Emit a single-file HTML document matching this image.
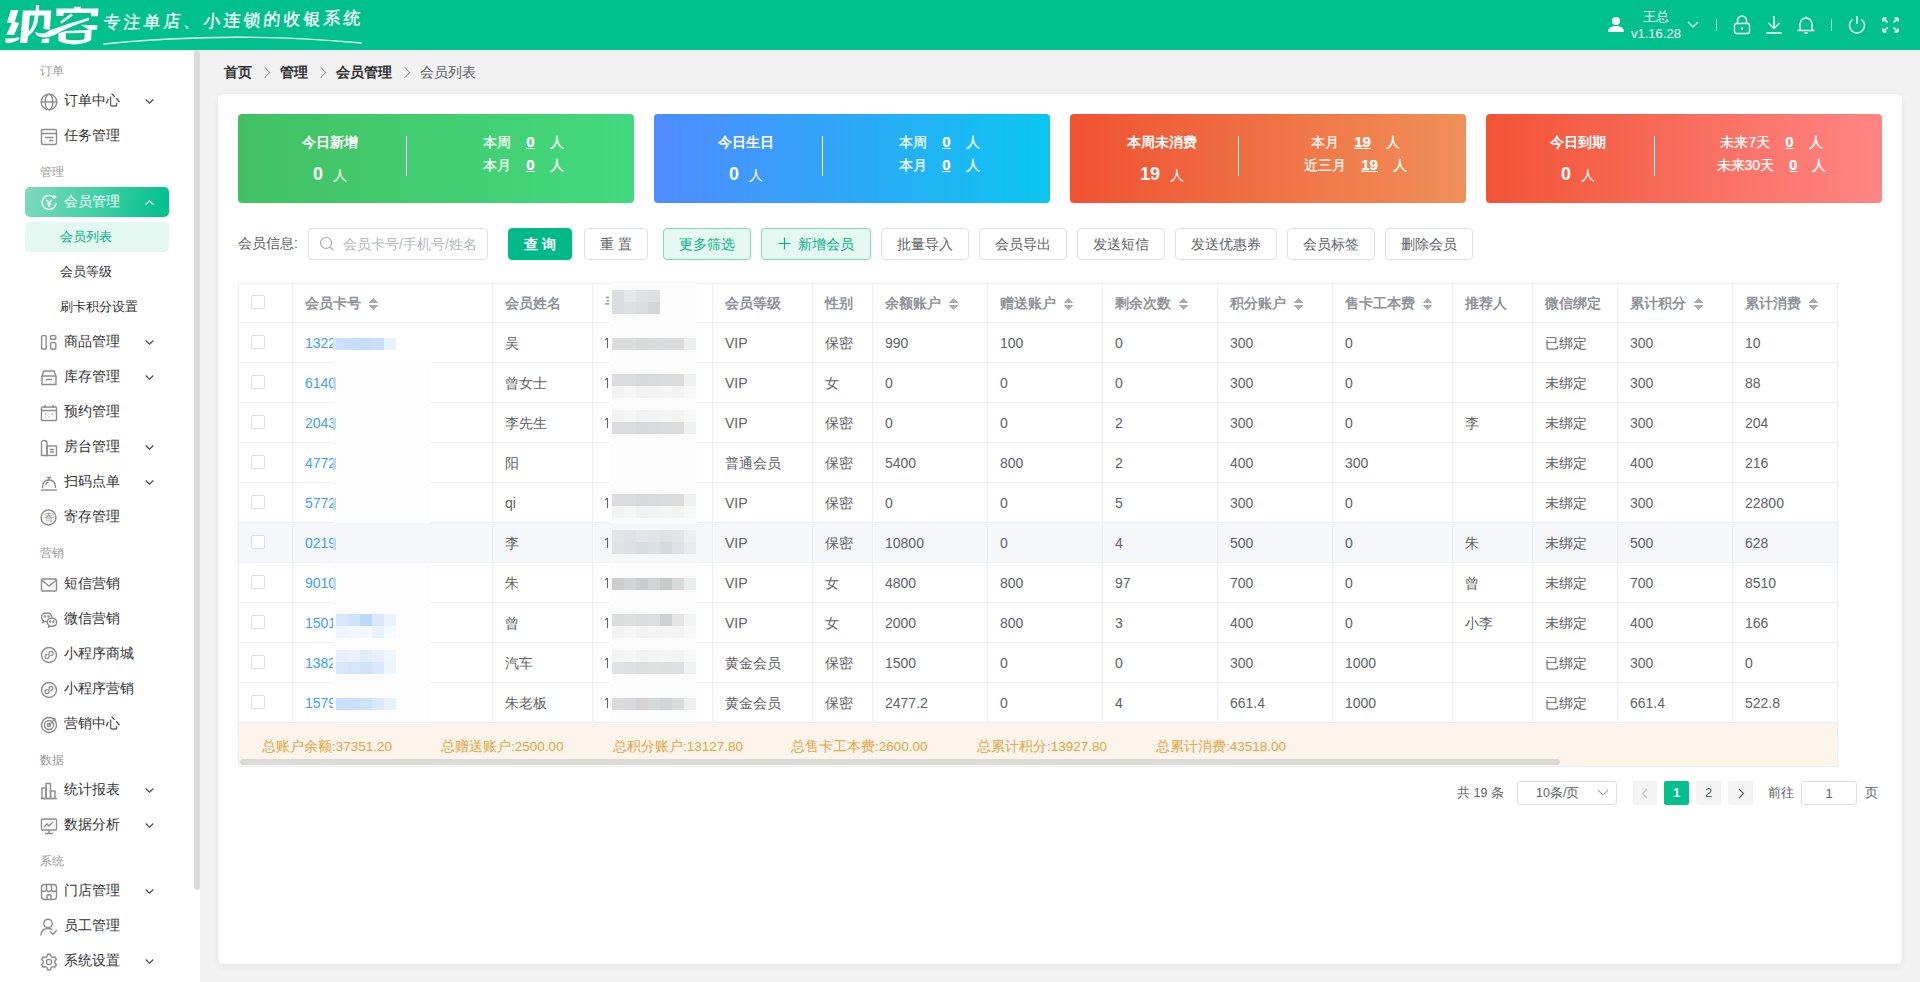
<!DOCTYPE html><html><head><meta charset="utf-8"><style>*{box-sizing:border-box;margin:0;padding:0}
html,body{width:1920px;height:982px;overflow:hidden;background:#f2f2f2;font-family:"Liberation Sans",sans-serif;font-size:14px;color:#606266}
.a{position:absolute;white-space:nowrap}
#hdr{position:absolute;left:0;top:0;width:1920px;height:50px;background:#00c08b}
#side{position:absolute;left:0;top:50px;width:200px;height:932px;background:#fff}
#sbar{position:absolute;left:194px;top:50px;width:6px;height:840px;background:#dcdcdf;border-radius:3px}
.glabel{position:absolute;left:40px;font-size:12px;color:#999;line-height:16px}
.mi{position:absolute;left:40px;width:130px;height:20px;font-size:14px;color:#333;line-height:20px}
.mi svg.ic{position:absolute;left:0;top:3px}
.mi .t{position:absolute;left:24px;top:0;white-space:nowrap}
.mi svg.chev{position:absolute;left:105px;top:9px}
.sub{position:absolute;left:60px;font-size:13px;color:#333;line-height:18px}
#card{position:absolute;left:218px;top:94px;width:1684px;height:870px;background:#fff;border-radius:6px;box-shadow:0 2px 10px rgba(0,0,0,.06)}
.stat{position:absolute;top:114px;width:396px;height:89px;border-radius:4px;color:#fff}
</style></head><body>
<div id="hdr"></div>
<svg class="a" style="left:0;top:0" width="110" height="50" viewBox="0 0 1920 873"><g fill="#fff"><path d="M190 175 L320 175 L258 385 L335 400 L245 612 L108 612 L205 405 L120 392 Z"/><path d="M88 672 Q200 680 330 652 L332 695 Q230 745 160 755 L100 752 Z"/><path d="M400 185 L895 185 L870 520 L760 505 L772 270 L670 270 Q670 500 488 640 L475 752 L350 752 Z M520 270 L500 555 Q590 450 605 270 Z"/><path d="M625 88 L682 88 L682 190 L625 190 Z"/><path d="M735 680 L860 670 L855 752 L722 752 Z"/><path d="M605 555 Q760 625 870 530 Q1200 400 1555 310 L1555 355 Q1250 450 1000 585 Q800 705 640 620 Z"/><path d="M1290 118 L1412 118 L1412 165 L1290 165 Z"/><path d="M985 150 L1720 150 L1710 282 L1588 282 L1588 228 L1112 228 L1105 280 L985 280 Z"/><path d="M1048 378 L1240 238 L1275 270 L1078 412 Z"/><path d="M1410 432 L1705 440 L1690 520 L1550 520 Z"/><path d="M1020 580 L1150 540 L1600 520 L1590 700 Q1500 770 1300 775 Q1100 770 1020 712 Z M1152 582 L1152 690 Q1300 715 1472 690 L1480 575 Z" fill-rule="evenodd"/></g></svg>
<div class="a" style="left:103px;top:9px;font-size:17px;line-height:24px;color:#fff;letter-spacing:3px;-webkit-text-stroke:0.3px #fff;transform:rotate(-1deg) skewX(-6deg)">专注单店、小连锁的收银系统</div>
<svg class="a" style="left:100px;top:33px" width="266" height="14"><path d="M3 11 Q130 -2 262 10" stroke="#fff" stroke-width="1.3" fill="none" opacity=".9"/></svg>
<svg class="a" style="left:1607px;top:16px" width="18" height="18" viewBox="0 0 18 18"><circle cx="9" cy="5" r="4" fill="#fff"/><path d="M1 16 Q1 10 9 10 Q17 10 17 16 Z" fill="#fff"/></svg>
<div class="a" style="left:1643px;top:9px;font-size:13px;line-height:16px;color:#fff">王总</div>
<div class="a" style="left:1631px;top:26px;font-size:13px;line-height:16px;color:#fff">v1.16.28</div>
<svg class="a" style="left:1687px;top:21px" width="12" height="8"><path d="M1 1 L6 6 L11 1" stroke="#fff" stroke-width="1.2" fill="none"/></svg>
<div class="a" style="left:1716px;top:19px;width:1px;height:12px;background:rgba(255,255,255,.6)"></div>
<div class="a" style="left:1831px;top:19px;width:1px;height:12px;background:rgba(255,255,255,.6)"></div>
<svg class="a" style="left:1733px;top:15px" width="18" height="20" viewBox="0 0 18 20"><rect x="1.5" y="8.5" width="15" height="10" rx="2" stroke="#fff" stroke-width="1.4" fill="none"/><path d="M4.5 8.5 V5.5 A4.5 4.5 0 0 1 13.5 5.5 V8.5" stroke="#fff" stroke-width="1.4" fill="none"/><path d="M9 12 V15" stroke="#fff" stroke-width="1.6"/></svg>
<svg class="a" style="left:1765px;top:15px" width="18" height="20" viewBox="0 0 18 20"><path d="M9 1 V13 M3.5 8 L9 13.5 L14.5 8 M1 18 H17" stroke="#fff" stroke-width="1.4" fill="none"/></svg>
<svg class="a" style="left:1796px;top:15px" width="20" height="20" viewBox="0 0 20 20"><path d="M10 1.5 V3 M4 15 V9 A6 6 0 0 1 16 9 V15 M1.5 15.5 H18.5 M8.5 17.5 Q10 19 11.5 17.5" stroke="#fff" stroke-width="1.4" fill="none"/></svg>
<svg class="a" style="left:1847px;top:15px" width="20" height="20" viewBox="0 0 20 20"><path d="M10 1 V9" stroke="#fff" stroke-width="1.4"/><path d="M5.5 4.5 A7.5 7.5 0 1 0 14.5 4.5" stroke="#fff" stroke-width="1.4" fill="none"/></svg>
<svg class="a" style="left:1882px;top:17px" width="17" height="16" viewBox="0 0 17 16"><path d="M1 1 L5.5 5.5 M1 1 H4.5 M1 1 V4.5 M16 1 L11.5 5.5 M16 1 H12.5 M16 1 V4.5 M1 15 L5.5 10.5 M1 15 H4.5 M1 15 V11.5 M16 15 L11.5 10.5 M16 15 H12.5 M16 15 V11.5" stroke="#fff" stroke-width="1.6" fill="none"/></svg>
<div id="side"></div>
<div id="sbar"></div>
<div class="glabel" style="top:63px">订单</div>
<div class="mi" style="top:90px"><svg class="ic" width="18" height="18" viewBox="0 0 18 18" fill="none" stroke="#8c8c8c" stroke-width="1.4"><circle cx="9" cy="9" r="7.8"/><path d="M1.2 9 H16.8"/><ellipse cx="9" cy="9" rx="3.8" ry="7.8"/></svg><span class="t">订单中心</span><svg class="chev" width="9" height="5" viewBox="0 0 9 5"><path d="M0.7 0.5 L4.5 4.2 L8.3 0.5" stroke="#444" stroke-width="1.1" fill="none"/></svg></div>
<div class="mi" style="top:125px"><svg class="ic" width="18" height="18" viewBox="0 0 18 18" fill="none" stroke="#8c8c8c" stroke-width="1.4"><rect x="1.5" y="1.5" width="15" height="15" rx="1.5"/><path d="M1.5 5.5 H16.5 M5 9.5 H13 M9 12.5 H13"/></svg><span class="t">任务管理</span></div>
<div class="glabel" style="top:164px">管理</div>
<div class="a" style="left:25px;top:187px;width:144px;height:30px;border-radius:5px;background:linear-gradient(100deg,#7ddbbd 0%,#3fcfa3 50%,#00c08b 100%)"></div>
<div class="mi" style="top:191px;color:#fff"><svg class="ic" width="18" height="18" viewBox="0 0 18 18" fill="none" stroke="#fff" stroke-width="1.4"><path d="M14.5 4 A7 7 0 1 0 16 9"/><path d="M12 3 H15.5 M13.5 1.5 L15.5 3 L13.5 4.5"/><path d="M6.5 6 L9 9 L11.5 6 M9 9 V13 M7 10 H11"/></svg><span class="t">会员管理</span><svg class="chev" width="9" height="5" viewBox="0 0 9 5"><path d="M0.7 4.5 L4.5 0.8 L8.3 4.5" stroke="#fff" stroke-width="1.1" fill="none"/></svg></div>
<div class="a" style="left:25px;top:222px;width:144px;height:30px;border-radius:5px;background:#e3f8f1"></div>
<div class="sub" style="top:228px;color:#00b386">会员列表</div>
<div class="sub" style="top:263px">会员等级</div>
<div class="sub" style="top:298px">刷卡积分设置</div>
<div class="mi" style="top:331px"><svg class="ic" width="18" height="18" viewBox="0 0 18 18" fill="none" stroke="#8c8c8c" stroke-width="1.4"><rect x="1.6" y="1.6" width="4.6" height="13.4" rx="0.8"/><rect x="10.6" y="1.6" width="5.2" height="3.6" rx="0.8"/><rect x="10.6" y="8.6" width="5.2" height="6.4" rx="0.8"/></svg><span class="t">商品管理</span><svg class="chev" width="9" height="5" viewBox="0 0 9 5"><path d="M0.7 0.5 L4.5 4.2 L8.3 0.5" stroke="#444" stroke-width="1.1" fill="none"/></svg></div>
<div class="mi" style="top:366px"><svg class="ic" width="18" height="18" viewBox="0 0 18 18" fill="none" stroke="#8c8c8c" stroke-width="1.4"><path d="M2 7 V15.5 H16 V7"/><path d="M2 7 L4 2 H14 L16 7 Z"/><path d="M6 10.5 H12"/></svg><span class="t">库存管理</span><svg class="chev" width="9" height="5" viewBox="0 0 9 5"><path d="M0.7 0.5 L4.5 4.2 L8.3 0.5" stroke="#444" stroke-width="1.1" fill="none"/></svg></div>
<div class="mi" style="top:401px"><svg class="ic" width="18" height="18" viewBox="0 0 18 18" fill="none" stroke="#8c8c8c" stroke-width="1.4"><rect x="1.5" y="3" width="15" height="13.5" rx="1"/><path d="M5 1 V4 M13 1 V4 M1.5 6.5 H16.5"/><path d="M5 10 H6 M8.5 10 H9.5 M12 10 H13 M5 13 H6 M8.5 13 H9.5" stroke-width="1.2"/></svg><span class="t">预约管理</span></div>
<div class="mi" style="top:436px"><svg class="ic" width="18" height="18" viewBox="0 0 18 18" fill="none" stroke="#8c8c8c" stroke-width="1.4"><path d="M1.5 16.5 V4 Q1.5 1.5 4 1.5 Q7 1.5 7 4 V16.5 Z"/><rect x="7" y="7" width="9.5" height="9.5"/><path d="M10 10.5 H14 M10 13 H14"/></svg><span class="t">房台管理</span><svg class="chev" width="9" height="5" viewBox="0 0 9 5"><path d="M0.7 0.5 L4.5 4.2 L8.3 0.5" stroke="#444" stroke-width="1.1" fill="none"/></svg></div>
<div class="mi" style="top:471px"><svg class="ic" width="18" height="18" viewBox="0 0 18 18" fill="none" stroke="#8c8c8c" stroke-width="1.4"><path d="M1 16 H17"/><path d="M2.5 14 Q2.5 6 9 6 Q15.5 6 15.5 14"/><path d="M9 4 V6 M7 3.5 H11"/><path d="M6 11 Q6 8.5 8.5 8"/></svg><span class="t">扫码点单</span><svg class="chev" width="9" height="5" viewBox="0 0 9 5"><path d="M0.7 0.5 L4.5 4.2 L8.3 0.5" stroke="#444" stroke-width="1.1" fill="none"/></svg></div>
<div class="mi" style="top:506px"><svg class="ic" width="18" height="18" viewBox="0 0 18 18" fill="none" stroke="#8c8c8c" stroke-width="1.4"><circle cx="8.5" cy="8.5" r="7.5"/><text x="8.5" y="12.2" font-size="9.5" text-anchor="middle" fill="#8c8c8c" stroke="none" font-family="Liberation Sans">寄</text></svg><span class="t">寄存管理</span></div>
<div class="glabel" style="top:545px">营销</div>
<div class="mi" style="top:573px"><svg class="ic" width="18" height="18" viewBox="0 0 18 18" fill="none" stroke="#8c8c8c" stroke-width="1.4"><rect x="1.5" y="3" width="15" height="12" rx="1"/><path d="M1.5 4 L9 10 L16.5 4"/></svg><span class="t">短信营销</span></div>
<div class="mi" style="top:608px"><svg class="ic" width="18" height="18" viewBox="0 0 18 18" fill="none" stroke="#8c8c8c" stroke-width="1.4"><path d="M12 6.5 Q11.5 2 6.8 2 Q1.5 2 1.5 6.3 Q1.5 8.5 3.3 9.6 L2.8 11.5 L5 10.4 Q6 10.7 7 10.7"/><path d="M7.2 11.3 Q7.2 7.3 11.8 7.3 Q16.6 7.3 16.6 11.3 Q16.6 15.3 11.8 15.3 Q11 15.3 10.3 15.1 L8.6 16 L9 14.4 Q7.2 13.3 7.2 11.3 Z"/><circle cx="5" cy="5.5" r="0.5" fill="#8c8c8c"/><circle cx="8.5" cy="5.5" r="0.5" fill="#8c8c8c"/><circle cx="10.2" cy="10.5" r="0.5" fill="#8c8c8c"/><circle cx="13.4" cy="10.5" r="0.5" fill="#8c8c8c"/></svg><span class="t">微信营销</span></div>
<div class="mi" style="top:643px"><svg class="ic" width="18" height="18" viewBox="0 0 18 18" fill="none" stroke="#8c8c8c" stroke-width="1.4"><circle cx="9" cy="9" r="7.5"/><path d="M7.2 8.6 A2 2 0 1 0 9 10.5 V7.5 A2 2 0 1 1 10.8 9.4" stroke-width="1.3" stroke-linecap="round"/></svg><span class="t">小程序商城</span></div>
<div class="mi" style="top:678px"><svg class="ic" width="18" height="18" viewBox="0 0 18 18" fill="none" stroke="#8c8c8c" stroke-width="1.4"><circle cx="9" cy="9" r="7.5"/><path d="M7.2 8.6 A2 2 0 1 0 9 10.5 V7.5 A2 2 0 1 1 10.8 9.4" stroke-width="1.3" stroke-linecap="round"/></svg><span class="t">小程序营销</span></div>
<div class="mi" style="top:713px"><svg class="ic" width="18" height="18" viewBox="0 0 18 18" fill="none" stroke="#8c8c8c" stroke-width="1.4"><circle cx="9" cy="9" r="7.5"/><circle cx="9" cy="9" r="4.5"/><circle cx="9" cy="9" r="1.5"/><path d="M9 9 L15 3 M13 3 H15 V5"/></svg><span class="t">营销中心</span></div>
<div class="glabel" style="top:752px">数据</div>
<div class="mi" style="top:779px"><svg class="ic" width="18" height="18" viewBox="0 0 18 18" fill="none" stroke="#8c8c8c" stroke-width="1.4"><path d="M1 16.5 H17"/><rect x="2" y="6" width="4" height="10.5"/><rect x="6" y="1.5" width="4.5" height="15"/><rect x="10.5" y="9" width="4.5" height="7.5"/></svg><span class="t">统计报表</span><svg class="chev" width="9" height="5" viewBox="0 0 9 5"><path d="M0.7 0.5 L4.5 4.2 L8.3 0.5" stroke="#444" stroke-width="1.1" fill="none"/></svg></div>
<div class="mi" style="top:814px"><svg class="ic" width="18" height="18" viewBox="0 0 18 18" fill="none" stroke="#8c8c8c" stroke-width="1.4"><rect x="1.5" y="2" width="15" height="11" rx="1"/><path d="M9 13 V16.5 M5 16.5 H13 M4 10 L7 7 L9 9 L13 5"/></svg><span class="t">数据分析</span><svg class="chev" width="9" height="5" viewBox="0 0 9 5"><path d="M0.7 0.5 L4.5 4.2 L8.3 0.5" stroke="#444" stroke-width="1.1" fill="none"/></svg></div>
<div class="glabel" style="top:853px">系统</div>
<div class="mi" style="top:880px"><svg class="ic" width="18" height="18" viewBox="0 0 18 18" fill="none" stroke="#8c8c8c" stroke-width="1.4"><rect x="1.5" y="1.5" width="15" height="15" rx="3"/><path d="M1.5 7.5 Q4 9.5 6.5 7.5 Q9 9.5 11.5 7.5 Q14 9.5 16.5 7.5 M6.5 1.5 V7.5 M11.5 1.5 V7.5 M7 16.5 V12.5 Q9 11 11 12.5 V16.5"/></svg><span class="t">门店管理</span><svg class="chev" width="9" height="5" viewBox="0 0 9 5"><path d="M0.7 0.5 L4.5 4.2 L8.3 0.5" stroke="#444" stroke-width="1.1" fill="none"/></svg></div>
<div class="mi" style="top:915px"><svg class="ic" width="18" height="18" viewBox="0 0 18 18" fill="none" stroke="#8c8c8c" stroke-width="1.4"><circle cx="8" cy="5.5" r="4.2"/><path d="M1 17 Q1.5 10.5 8 10.5 Q10.5 10.5 12 11.5" stroke-linecap="round"/><path d="M10.5 14 L12.8 16.3 L16.5 12.5" stroke-linecap="round"/></svg><span class="t">员工管理</span></div>
<div class="mi" style="top:950px"><svg class="ic" width="18" height="18" viewBox="0 0 18 18" fill="none" stroke="#8c8c8c" stroke-width="1.4"><path stroke-linejoin="round" d="M7.6 1.3 H10.4 L11 3.4 L12.9 4.5 L15 3.9 L16.4 6.3 L14.9 7.9 V10.1 L16.4 11.7 L15 14.1 L12.9 13.5 L11 14.6 L10.4 16.7 H7.6 L7 14.6 L5.1 13.5 L3 14.1 L1.6 11.7 L3.1 10.1 V7.9 L1.6 6.3 L3 3.9 L5.1 4.5 L7 3.4 Z"/><circle cx="9" cy="9" r="2.6"/></svg><span class="t">系统设置</span><svg class="chev" width="9" height="5" viewBox="0 0 9 5"><path d="M0.7 0.5 L4.5 4.2 L8.3 0.5" stroke="#444" stroke-width="1.1" fill="none"/></svg></div>
<div class="a" style="left:224px;top:62px;font-size:14px;line-height:20px;color:#303133;font-weight:bold">首页</div>
<div class="a" style="left:280px;top:62px;font-size:14px;line-height:20px;color:#303133;font-weight:bold">管理</div>
<div class="a" style="left:336px;top:62px;font-size:14px;line-height:20px;color:#303133;font-weight:bold">会员管理</div>
<div class="a" style="left:420px;top:62px;font-size:14px;line-height:20px;color:#606266">会员列表</div>
<svg class="a" style="left:263px;top:66px" width="8" height="13"><path d="M1.5 1 L6.5 6.5 L1.5 12" stroke="#a0a0a0" stroke-width="1.1" fill="none"/></svg>
<svg class="a" style="left:319px;top:66px" width="8" height="13"><path d="M1.5 1 L6.5 6.5 L1.5 12" stroke="#a0a0a0" stroke-width="1.1" fill="none"/></svg>
<svg class="a" style="left:403px;top:66px" width="8" height="13"><path d="M1.5 1 L6.5 6.5 L1.5 12" stroke="#a0a0a0" stroke-width="1.1" fill="none"/></svg>
<div id="card"></div>
<div class="stat" style="left:238px;background:linear-gradient(90deg,#42c163,#43d97e)">
<div class="a" style="left:0;width:184px;top:18px;text-align:center;font-weight:bold;font-size:14px;line-height:20px">今日新增</div>
<div class="a" style="left:0;width:184px;top:48px;text-align:center;line-height:24px"><b style="font-size:18px">0</b><span style="font-size:14px;margin-left:10px">人</span></div>
<div class="a" style="left:168px;top:22px;width:1px;height:40px;background:#fff"></div>
<div class="a" style="left:172px;width:227px;top:18px;text-align:center;font-size:14px;line-height:20px;-webkit-text-stroke:0.25px #fff">本周<b style="text-decoration:underline;margin:0 15px 0 15px;font-size:15px">0</b>人</div>
<div class="a" style="left:172px;width:227px;top:41px;text-align:center;font-size:14px;line-height:20px;-webkit-text-stroke:0.25px #fff">本月<b style="text-decoration:underline;margin:0 15px 0 15px;font-size:15px">0</b>人</div>
</div>
<div class="stat" style="left:654px;background:linear-gradient(90deg,#4f8bff,#0bc6f0)">
<div class="a" style="left:0;width:184px;top:18px;text-align:center;font-weight:bold;font-size:14px;line-height:20px">今日生日</div>
<div class="a" style="left:0;width:184px;top:48px;text-align:center;line-height:24px"><b style="font-size:18px">0</b><span style="font-size:14px;margin-left:10px">人</span></div>
<div class="a" style="left:168px;top:22px;width:1px;height:40px;background:#fff"></div>
<div class="a" style="left:172px;width:227px;top:18px;text-align:center;font-size:14px;line-height:20px;-webkit-text-stroke:0.25px #fff">本周<b style="text-decoration:underline;margin:0 15px 0 15px;font-size:15px">0</b>人</div>
<div class="a" style="left:172px;width:227px;top:41px;text-align:center;font-size:14px;line-height:20px;-webkit-text-stroke:0.25px #fff">本月<b style="text-decoration:underline;margin:0 15px 0 15px;font-size:15px">0</b>人</div>
</div>
<div class="stat" style="left:1070px;background:linear-gradient(90deg,#f05232,#f09058)">
<div class="a" style="left:0;width:184px;top:18px;text-align:center;font-weight:bold;font-size:14px;line-height:20px">本周未消费</div>
<div class="a" style="left:0;width:184px;top:48px;text-align:center;line-height:24px"><b style="font-size:18px">19</b><span style="font-size:14px;margin-left:10px">人</span></div>
<div class="a" style="left:168px;top:22px;width:1px;height:40px;background:#fff"></div>
<div class="a" style="left:172px;width:227px;top:18px;text-align:center;font-size:14px;line-height:20px;-webkit-text-stroke:0.25px #fff">本月<b style="text-decoration:underline;margin:0 15px 0 15px;font-size:15px">19</b>人</div>
<div class="a" style="left:172px;width:227px;top:41px;text-align:center;font-size:14px;line-height:20px;-webkit-text-stroke:0.25px #fff">近三月<b style="text-decoration:underline;margin:0 15px 0 15px;font-size:15px">19</b>人</div>
</div>
<div class="stat" style="left:1486px;background:linear-gradient(90deg,#f25435,#ff8584)">
<div class="a" style="left:0;width:184px;top:18px;text-align:center;font-weight:bold;font-size:14px;line-height:20px">今日到期</div>
<div class="a" style="left:0;width:184px;top:48px;text-align:center;line-height:24px"><b style="font-size:18px">0</b><span style="font-size:14px;margin-left:10px">人</span></div>
<div class="a" style="left:168px;top:22px;width:1px;height:40px;background:#fff"></div>
<div class="a" style="left:172px;width:227px;top:18px;text-align:center;font-size:14px;line-height:20px;-webkit-text-stroke:0.25px #fff">未来7天<b style="text-decoration:underline;margin:0 15px 0 15px;font-size:15px">0</b>人</div>
<div class="a" style="left:172px;width:227px;top:41px;text-align:center;font-size:14px;line-height:20px;-webkit-text-stroke:0.25px #fff">未来30天<b style="text-decoration:underline;margin:0 15px 0 15px;font-size:15px">0</b>人</div>
</div>
<div class="a" style="left:238px;top:233px;font-size:14px;line-height:20px;color:#606266">会员信息:</div>
<div class="a" style="left:308px;top:228px;width:180px;height:32px;border:1px solid #dcdfe6;border-radius:4px"></div>
<svg class="a" style="left:319px;top:236px" width="16" height="16" viewBox="0 0 16 16"><circle cx="7" cy="7" r="5.5" stroke="#a8abb2" stroke-width="1.2" fill="none"/><path d="M11 11 L14 14" stroke="#a8abb2" stroke-width="1.2"/></svg>
<div class="a" style="left:343px;top:234px;font-size:14px;line-height:20px;color:#b4b7bd">会员卡号/手机号/姓名</div>
<div class="a" style="left:508px;top:228px;width:64px;height:32px;border-radius:4px;background:#00b988;border:1px solid #00b988;color:#fff;font-weight:bold;text-align:center;font-size:14px;line-height:30px">查 询</div>
<div class="a" style="left:584px;top:228px;width:64px;height:32px;border-radius:4px;background:#fff;border:1px solid #dcdfe6;color:#606266;text-align:center;font-size:14px;line-height:30px">重 置</div>
<div class="a" style="left:663px;top:228px;width:88px;height:32px;border-radius:4px;background:#e6f8f2;border:1px solid #7fd9bd;color:#00b386;text-align:center;font-size:14px;line-height:30px">更多筛选</div>
<div class="a" style="left:761px;top:228px;width:110px;height:32px;border-radius:4px;background:#e6f8f2;border:1px solid #7fd9bd;color:#00b386;text-align:center;font-size:14px;line-height:30px"><svg width="13" height="13" style="vertical-align:-1px;margin-right:7px"><path d="M6.5 0.5 V12.5 M0.5 6.5 H12.5" stroke="#00b386" stroke-width="1.2"/></svg>新增会员</div>
<div class="a" style="left:881px;top:228px;width:88px;height:32px;border-radius:4px;background:#fff;border:1px solid #dcdfe6;color:#606266;text-align:center;font-size:14px;line-height:30px">批量导入</div>
<div class="a" style="left:979px;top:228px;width:88px;height:32px;border-radius:4px;background:#fff;border:1px solid #dcdfe6;color:#606266;text-align:center;font-size:14px;line-height:30px">会员导出</div>
<div class="a" style="left:1077px;top:228px;width:88px;height:32px;border-radius:4px;background:#fff;border:1px solid #dcdfe6;color:#606266;text-align:center;font-size:14px;line-height:30px">发送短信</div>
<div class="a" style="left:1175px;top:228px;width:102px;height:32px;border-radius:4px;background:#fff;border:1px solid #dcdfe6;color:#606266;text-align:center;font-size:14px;line-height:30px">发送优惠券</div>
<div class="a" style="left:1287px;top:228px;width:88px;height:32px;border-radius:4px;background:#fff;border:1px solid #dcdfe6;color:#606266;text-align:center;font-size:14px;line-height:30px">会员标签</div>
<div class="a" style="left:1385px;top:228px;width:88px;height:32px;border-radius:4px;background:#fff;border:1px solid #dcdfe6;color:#606266;text-align:center;font-size:14px;line-height:30px">删除会员</div>
<div class="a" style="left:238px;top:523px;width:1599px;height:40px;background:#f5f7fa"></div>
<div class="a" style="left:238px;top:723px;width:1599px;height:43px;background:#fdf5ec"></div>
<div class="a" style="left:238px;top:283px;width:1600px;height:1px;background:#ebeef5"></div>
<div class="a" style="left:238px;top:322px;width:1600px;height:1px;background:#ebeef5"></div>
<div class="a" style="left:238px;top:362px;width:1600px;height:1px;background:#ebeef5"></div>
<div class="a" style="left:238px;top:402px;width:1600px;height:1px;background:#ebeef5"></div>
<div class="a" style="left:238px;top:442px;width:1600px;height:1px;background:#ebeef5"></div>
<div class="a" style="left:238px;top:482px;width:1600px;height:1px;background:#ebeef5"></div>
<div class="a" style="left:238px;top:522px;width:1600px;height:1px;background:#ebeef5"></div>
<div class="a" style="left:238px;top:562px;width:1600px;height:1px;background:#ebeef5"></div>
<div class="a" style="left:238px;top:602px;width:1600px;height:1px;background:#ebeef5"></div>
<div class="a" style="left:238px;top:642px;width:1600px;height:1px;background:#ebeef5"></div>
<div class="a" style="left:238px;top:682px;width:1600px;height:1px;background:#ebeef5"></div>
<div class="a" style="left:238px;top:722px;width:1600px;height:1px;background:#ebeef5"></div>
<div class="a" style="left:238px;top:766px;width:1600px;height:1px;background:#ebeef5"></div>
<div class="a" style="left:238px;top:283px;width:1px;height:440px;background:#ebeef5"></div>
<div class="a" style="left:292px;top:283px;width:1px;height:440px;background:#ebeef5"></div>
<div class="a" style="left:492px;top:283px;width:1px;height:440px;background:#ebeef5"></div>
<div class="a" style="left:592px;top:283px;width:1px;height:440px;background:#ebeef5"></div>
<div class="a" style="left:712px;top:283px;width:1px;height:440px;background:#ebeef5"></div>
<div class="a" style="left:812px;top:283px;width:1px;height:440px;background:#ebeef5"></div>
<div class="a" style="left:872px;top:283px;width:1px;height:440px;background:#ebeef5"></div>
<div class="a" style="left:987px;top:283px;width:1px;height:440px;background:#ebeef5"></div>
<div class="a" style="left:1102px;top:283px;width:1px;height:440px;background:#ebeef5"></div>
<div class="a" style="left:1217px;top:283px;width:1px;height:440px;background:#ebeef5"></div>
<div class="a" style="left:1332px;top:283px;width:1px;height:440px;background:#ebeef5"></div>
<div class="a" style="left:1452px;top:283px;width:1px;height:440px;background:#ebeef5"></div>
<div class="a" style="left:1532px;top:283px;width:1px;height:440px;background:#ebeef5"></div>
<div class="a" style="left:1617px;top:283px;width:1px;height:440px;background:#ebeef5"></div>
<div class="a" style="left:1732px;top:283px;width:1px;height:440px;background:#ebeef5"></div>
<div class="a" style="left:1837px;top:283px;width:1px;height:440px;background:#ebeef5"></div>
<div class="a" style="left:238px;top:723px;width:1px;height:43px;background:#ebeef5"></div>
<div class="a" style="left:1837px;top:723px;width:1px;height:43px;background:#ebeef5"></div>
<div class="a" style="left:251px;top:295px;width:14px;height:14px;border:1px solid #dcdfe6;border-radius:2px;background:#fff"></div>
<div class="a" style="left:305px;top:293px;font-size:14px;line-height:20px;font-weight:bold;color:#909399">会员卡号</div>
<svg class="a" style="left:368px;top:297px" width="11" height="14" viewBox="0 0 11 14"><path d="M0.5 6 L5.5 1 L10.5 6 Z M0.5 8 L5.5 13 L10.5 8 Z" fill="#a8abb2"/></svg>
<div class="a" style="left:505px;top:293px;font-size:14px;line-height:20px;font-weight:bold;color:#909399">会员姓名</div>
<div class="a" style="left:605px;top:293px;font-size:14px;line-height:20px;font-weight:bold;color:#909399">手机号</div>
<div class="a" style="left:725px;top:293px;font-size:14px;line-height:20px;font-weight:bold;color:#909399">会员等级</div>
<div class="a" style="left:825px;top:293px;font-size:14px;line-height:20px;font-weight:bold;color:#909399">性别</div>
<div class="a" style="left:885px;top:293px;font-size:14px;line-height:20px;font-weight:bold;color:#909399">余额账户</div>
<svg class="a" style="left:948px;top:297px" width="11" height="14" viewBox="0 0 11 14"><path d="M0.5 6 L5.5 1 L10.5 6 Z M0.5 8 L5.5 13 L10.5 8 Z" fill="#a8abb2"/></svg>
<div class="a" style="left:1000px;top:293px;font-size:14px;line-height:20px;font-weight:bold;color:#909399">赠送账户</div>
<svg class="a" style="left:1063px;top:297px" width="11" height="14" viewBox="0 0 11 14"><path d="M0.5 6 L5.5 1 L10.5 6 Z M0.5 8 L5.5 13 L10.5 8 Z" fill="#a8abb2"/></svg>
<div class="a" style="left:1115px;top:293px;font-size:14px;line-height:20px;font-weight:bold;color:#909399">剩余次数</div>
<svg class="a" style="left:1178px;top:297px" width="11" height="14" viewBox="0 0 11 14"><path d="M0.5 6 L5.5 1 L10.5 6 Z M0.5 8 L5.5 13 L10.5 8 Z" fill="#a8abb2"/></svg>
<div class="a" style="left:1230px;top:293px;font-size:14px;line-height:20px;font-weight:bold;color:#909399">积分账户</div>
<svg class="a" style="left:1293px;top:297px" width="11" height="14" viewBox="0 0 11 14"><path d="M0.5 6 L5.5 1 L10.5 6 Z M0.5 8 L5.5 13 L10.5 8 Z" fill="#a8abb2"/></svg>
<div class="a" style="left:1345px;top:293px;font-size:14px;line-height:20px;font-weight:bold;color:#909399">售卡工本费</div>
<svg class="a" style="left:1422px;top:297px" width="11" height="14" viewBox="0 0 11 14"><path d="M0.5 6 L5.5 1 L10.5 6 Z M0.5 8 L5.5 13 L10.5 8 Z" fill="#a8abb2"/></svg>
<div class="a" style="left:1465px;top:293px;font-size:14px;line-height:20px;font-weight:bold;color:#909399">推荐人</div>
<div class="a" style="left:1545px;top:293px;font-size:14px;line-height:20px;font-weight:bold;color:#909399">微信绑定</div>
<div class="a" style="left:1630px;top:293px;font-size:14px;line-height:20px;font-weight:bold;color:#909399">累计积分</div>
<svg class="a" style="left:1693px;top:297px" width="11" height="14" viewBox="0 0 11 14"><path d="M0.5 6 L5.5 1 L10.5 6 Z M0.5 8 L5.5 13 L10.5 8 Z" fill="#a8abb2"/></svg>
<div class="a" style="left:1745px;top:293px;font-size:14px;line-height:20px;font-weight:bold;color:#909399">累计消费</div>
<svg class="a" style="left:1808px;top:297px" width="11" height="14" viewBox="0 0 11 14"><path d="M0.5 6 L5.5 1 L10.5 6 Z M0.5 8 L5.5 13 L10.5 8 Z" fill="#a8abb2"/></svg>
<div class="a" style="left:251px;top:335px;width:14px;height:14px;border:1px solid #dcdfe6;border-radius:2px;background:#fff"></div>
<div class="a" style="left:305px;top:333px;font-size:14px;line-height:20px;color:#409eff">1322</div>
<div class="a" style="left:505px;top:333px;font-size:14px;line-height:20px;color:#606266">吴</div>
<div class="a" style="left:725px;top:333px;font-size:14px;line-height:20px;color:#606266">VIP</div>
<div class="a" style="left:825px;top:333px;font-size:14px;line-height:20px;color:#606266">保密</div>
<div class="a" style="left:885px;top:333px;font-size:14px;line-height:20px;color:#606266">990</div>
<div class="a" style="left:1000px;top:333px;font-size:14px;line-height:20px;color:#606266">100</div>
<div class="a" style="left:1115px;top:333px;font-size:14px;line-height:20px;color:#606266">0</div>
<div class="a" style="left:1230px;top:333px;font-size:14px;line-height:20px;color:#606266">300</div>
<div class="a" style="left:1345px;top:333px;font-size:14px;line-height:20px;color:#606266">0</div>
<div class="a" style="left:1545px;top:333px;font-size:14px;line-height:20px;color:#606266">已绑定</div>
<div class="a" style="left:1630px;top:333px;font-size:14px;line-height:20px;color:#606266">300</div>
<div class="a" style="left:1745px;top:333px;font-size:14px;line-height:20px;color:#606266">10</div>
<div class="a" style="left:251px;top:375px;width:14px;height:14px;border:1px solid #dcdfe6;border-radius:2px;background:#fff"></div>
<div class="a" style="left:305px;top:373px;font-size:14px;line-height:20px;color:#409eff">6140</div>
<div class="a" style="left:505px;top:373px;font-size:14px;line-height:20px;color:#606266">曾女士</div>
<div class="a" style="left:725px;top:373px;font-size:14px;line-height:20px;color:#606266">VIP</div>
<div class="a" style="left:825px;top:373px;font-size:14px;line-height:20px;color:#606266">女</div>
<div class="a" style="left:885px;top:373px;font-size:14px;line-height:20px;color:#606266">0</div>
<div class="a" style="left:1000px;top:373px;font-size:14px;line-height:20px;color:#606266">0</div>
<div class="a" style="left:1115px;top:373px;font-size:14px;line-height:20px;color:#606266">0</div>
<div class="a" style="left:1230px;top:373px;font-size:14px;line-height:20px;color:#606266">300</div>
<div class="a" style="left:1345px;top:373px;font-size:14px;line-height:20px;color:#606266">0</div>
<div class="a" style="left:1545px;top:373px;font-size:14px;line-height:20px;color:#606266">未绑定</div>
<div class="a" style="left:1630px;top:373px;font-size:14px;line-height:20px;color:#606266">300</div>
<div class="a" style="left:1745px;top:373px;font-size:14px;line-height:20px;color:#606266">88</div>
<div class="a" style="left:251px;top:415px;width:14px;height:14px;border:1px solid #dcdfe6;border-radius:2px;background:#fff"></div>
<div class="a" style="left:305px;top:413px;font-size:14px;line-height:20px;color:#409eff">2043</div>
<div class="a" style="left:505px;top:413px;font-size:14px;line-height:20px;color:#606266">李先生</div>
<div class="a" style="left:725px;top:413px;font-size:14px;line-height:20px;color:#606266">VIP</div>
<div class="a" style="left:825px;top:413px;font-size:14px;line-height:20px;color:#606266">保密</div>
<div class="a" style="left:885px;top:413px;font-size:14px;line-height:20px;color:#606266">0</div>
<div class="a" style="left:1000px;top:413px;font-size:14px;line-height:20px;color:#606266">0</div>
<div class="a" style="left:1115px;top:413px;font-size:14px;line-height:20px;color:#606266">2</div>
<div class="a" style="left:1230px;top:413px;font-size:14px;line-height:20px;color:#606266">300</div>
<div class="a" style="left:1345px;top:413px;font-size:14px;line-height:20px;color:#606266">0</div>
<div class="a" style="left:1465px;top:413px;font-size:14px;line-height:20px;color:#606266">李</div>
<div class="a" style="left:1545px;top:413px;font-size:14px;line-height:20px;color:#606266">未绑定</div>
<div class="a" style="left:1630px;top:413px;font-size:14px;line-height:20px;color:#606266">300</div>
<div class="a" style="left:1745px;top:413px;font-size:14px;line-height:20px;color:#606266">204</div>
<div class="a" style="left:251px;top:455px;width:14px;height:14px;border:1px solid #dcdfe6;border-radius:2px;background:#fff"></div>
<div class="a" style="left:305px;top:453px;font-size:14px;line-height:20px;color:#409eff">4772</div>
<div class="a" style="left:505px;top:453px;font-size:14px;line-height:20px;color:#606266">阳</div>
<div class="a" style="left:725px;top:453px;font-size:14px;line-height:20px;color:#606266">普通会员</div>
<div class="a" style="left:825px;top:453px;font-size:14px;line-height:20px;color:#606266">保密</div>
<div class="a" style="left:885px;top:453px;font-size:14px;line-height:20px;color:#606266">5400</div>
<div class="a" style="left:1000px;top:453px;font-size:14px;line-height:20px;color:#606266">800</div>
<div class="a" style="left:1115px;top:453px;font-size:14px;line-height:20px;color:#606266">2</div>
<div class="a" style="left:1230px;top:453px;font-size:14px;line-height:20px;color:#606266">400</div>
<div class="a" style="left:1345px;top:453px;font-size:14px;line-height:20px;color:#606266">300</div>
<div class="a" style="left:1545px;top:453px;font-size:14px;line-height:20px;color:#606266">未绑定</div>
<div class="a" style="left:1630px;top:453px;font-size:14px;line-height:20px;color:#606266">400</div>
<div class="a" style="left:1745px;top:453px;font-size:14px;line-height:20px;color:#606266">216</div>
<div class="a" style="left:251px;top:495px;width:14px;height:14px;border:1px solid #dcdfe6;border-radius:2px;background:#fff"></div>
<div class="a" style="left:305px;top:493px;font-size:14px;line-height:20px;color:#409eff">5772</div>
<div class="a" style="left:505px;top:493px;font-size:14px;line-height:20px;color:#606266">qi</div>
<div class="a" style="left:725px;top:493px;font-size:14px;line-height:20px;color:#606266">VIP</div>
<div class="a" style="left:825px;top:493px;font-size:14px;line-height:20px;color:#606266">保密</div>
<div class="a" style="left:885px;top:493px;font-size:14px;line-height:20px;color:#606266">0</div>
<div class="a" style="left:1000px;top:493px;font-size:14px;line-height:20px;color:#606266">0</div>
<div class="a" style="left:1115px;top:493px;font-size:14px;line-height:20px;color:#606266">5</div>
<div class="a" style="left:1230px;top:493px;font-size:14px;line-height:20px;color:#606266">300</div>
<div class="a" style="left:1345px;top:493px;font-size:14px;line-height:20px;color:#606266">0</div>
<div class="a" style="left:1545px;top:493px;font-size:14px;line-height:20px;color:#606266">未绑定</div>
<div class="a" style="left:1630px;top:493px;font-size:14px;line-height:20px;color:#606266">300</div>
<div class="a" style="left:1745px;top:493px;font-size:14px;line-height:20px;color:#606266">22800</div>
<div class="a" style="left:251px;top:535px;width:14px;height:14px;border:1px solid #dcdfe6;border-radius:2px;background:#fff"></div>
<div class="a" style="left:305px;top:533px;font-size:14px;line-height:20px;color:#409eff">0219</div>
<div class="a" style="left:505px;top:533px;font-size:14px;line-height:20px;color:#606266">李</div>
<div class="a" style="left:725px;top:533px;font-size:14px;line-height:20px;color:#606266">VIP</div>
<div class="a" style="left:825px;top:533px;font-size:14px;line-height:20px;color:#606266">保密</div>
<div class="a" style="left:885px;top:533px;font-size:14px;line-height:20px;color:#606266">10800</div>
<div class="a" style="left:1000px;top:533px;font-size:14px;line-height:20px;color:#606266">0</div>
<div class="a" style="left:1115px;top:533px;font-size:14px;line-height:20px;color:#606266">4</div>
<div class="a" style="left:1230px;top:533px;font-size:14px;line-height:20px;color:#606266">500</div>
<div class="a" style="left:1345px;top:533px;font-size:14px;line-height:20px;color:#606266">0</div>
<div class="a" style="left:1465px;top:533px;font-size:14px;line-height:20px;color:#606266">朱</div>
<div class="a" style="left:1545px;top:533px;font-size:14px;line-height:20px;color:#606266">未绑定</div>
<div class="a" style="left:1630px;top:533px;font-size:14px;line-height:20px;color:#606266">500</div>
<div class="a" style="left:1745px;top:533px;font-size:14px;line-height:20px;color:#606266">628</div>
<div class="a" style="left:251px;top:575px;width:14px;height:14px;border:1px solid #dcdfe6;border-radius:2px;background:#fff"></div>
<div class="a" style="left:305px;top:573px;font-size:14px;line-height:20px;color:#409eff">9010</div>
<div class="a" style="left:505px;top:573px;font-size:14px;line-height:20px;color:#606266">朱</div>
<div class="a" style="left:725px;top:573px;font-size:14px;line-height:20px;color:#606266">VIP</div>
<div class="a" style="left:825px;top:573px;font-size:14px;line-height:20px;color:#606266">女</div>
<div class="a" style="left:885px;top:573px;font-size:14px;line-height:20px;color:#606266">4800</div>
<div class="a" style="left:1000px;top:573px;font-size:14px;line-height:20px;color:#606266">800</div>
<div class="a" style="left:1115px;top:573px;font-size:14px;line-height:20px;color:#606266">97</div>
<div class="a" style="left:1230px;top:573px;font-size:14px;line-height:20px;color:#606266">700</div>
<div class="a" style="left:1345px;top:573px;font-size:14px;line-height:20px;color:#606266">0</div>
<div class="a" style="left:1465px;top:573px;font-size:14px;line-height:20px;color:#606266">曾</div>
<div class="a" style="left:1545px;top:573px;font-size:14px;line-height:20px;color:#606266">未绑定</div>
<div class="a" style="left:1630px;top:573px;font-size:14px;line-height:20px;color:#606266">700</div>
<div class="a" style="left:1745px;top:573px;font-size:14px;line-height:20px;color:#606266">8510</div>
<div class="a" style="left:251px;top:615px;width:14px;height:14px;border:1px solid #dcdfe6;border-radius:2px;background:#fff"></div>
<div class="a" style="left:305px;top:613px;font-size:14px;line-height:20px;color:#409eff">1501</div>
<div class="a" style="left:505px;top:613px;font-size:14px;line-height:20px;color:#606266">曾</div>
<div class="a" style="left:725px;top:613px;font-size:14px;line-height:20px;color:#606266">VIP</div>
<div class="a" style="left:825px;top:613px;font-size:14px;line-height:20px;color:#606266">女</div>
<div class="a" style="left:885px;top:613px;font-size:14px;line-height:20px;color:#606266">2000</div>
<div class="a" style="left:1000px;top:613px;font-size:14px;line-height:20px;color:#606266">800</div>
<div class="a" style="left:1115px;top:613px;font-size:14px;line-height:20px;color:#606266">3</div>
<div class="a" style="left:1230px;top:613px;font-size:14px;line-height:20px;color:#606266">400</div>
<div class="a" style="left:1345px;top:613px;font-size:14px;line-height:20px;color:#606266">0</div>
<div class="a" style="left:1465px;top:613px;font-size:14px;line-height:20px;color:#606266">小李</div>
<div class="a" style="left:1545px;top:613px;font-size:14px;line-height:20px;color:#606266">未绑定</div>
<div class="a" style="left:1630px;top:613px;font-size:14px;line-height:20px;color:#606266">400</div>
<div class="a" style="left:1745px;top:613px;font-size:14px;line-height:20px;color:#606266">166</div>
<div class="a" style="left:251px;top:655px;width:14px;height:14px;border:1px solid #dcdfe6;border-radius:2px;background:#fff"></div>
<div class="a" style="left:305px;top:653px;font-size:14px;line-height:20px;color:#409eff">1382</div>
<div class="a" style="left:505px;top:653px;font-size:14px;line-height:20px;color:#606266">汽车</div>
<div class="a" style="left:725px;top:653px;font-size:14px;line-height:20px;color:#606266">黄金会员</div>
<div class="a" style="left:825px;top:653px;font-size:14px;line-height:20px;color:#606266">保密</div>
<div class="a" style="left:885px;top:653px;font-size:14px;line-height:20px;color:#606266">1500</div>
<div class="a" style="left:1000px;top:653px;font-size:14px;line-height:20px;color:#606266">0</div>
<div class="a" style="left:1115px;top:653px;font-size:14px;line-height:20px;color:#606266">0</div>
<div class="a" style="left:1230px;top:653px;font-size:14px;line-height:20px;color:#606266">300</div>
<div class="a" style="left:1345px;top:653px;font-size:14px;line-height:20px;color:#606266">1000</div>
<div class="a" style="left:1545px;top:653px;font-size:14px;line-height:20px;color:#606266">已绑定</div>
<div class="a" style="left:1630px;top:653px;font-size:14px;line-height:20px;color:#606266">300</div>
<div class="a" style="left:1745px;top:653px;font-size:14px;line-height:20px;color:#606266">0</div>
<div class="a" style="left:251px;top:695px;width:14px;height:14px;border:1px solid #dcdfe6;border-radius:2px;background:#fff"></div>
<div class="a" style="left:305px;top:693px;font-size:14px;line-height:20px;color:#409eff">1579</div>
<div class="a" style="left:505px;top:693px;font-size:14px;line-height:20px;color:#606266">朱老板</div>
<div class="a" style="left:725px;top:693px;font-size:14px;line-height:20px;color:#606266">黄金会员</div>
<div class="a" style="left:825px;top:693px;font-size:14px;line-height:20px;color:#606266">保密</div>
<div class="a" style="left:885px;top:693px;font-size:14px;line-height:20px;color:#606266">2477.2</div>
<div class="a" style="left:1000px;top:693px;font-size:14px;line-height:20px;color:#606266">0</div>
<div class="a" style="left:1115px;top:693px;font-size:14px;line-height:20px;color:#606266">4</div>
<div class="a" style="left:1230px;top:693px;font-size:14px;line-height:20px;color:#606266">661.4</div>
<div class="a" style="left:1345px;top:693px;font-size:14px;line-height:20px;color:#606266">1000</div>
<div class="a" style="left:1545px;top:693px;font-size:14px;line-height:20px;color:#606266">已绑定</div>
<div class="a" style="left:1630px;top:693px;font-size:14px;line-height:20px;color:#606266">661.4</div>
<div class="a" style="left:1745px;top:693px;font-size:14px;line-height:20px;color:#606266">522.8</div>
<div class="a" style="left:333px;top:362px;width:98px;height:360px;background:#fdfdfd"></div>
<div class="a" style="left:333px;top:523px;width:98px;height:40px;background:#f5f7fa"></div>
<div class="a" style="left:609px;top:281px;width:88px;height:441px;background:#fcfcfc"></div>
<div class="a" style="left:609px;top:523px;width:88px;height:40px;background:#f6f7f9"></div>
<div class="a" style="left:336px;top:338px;width:12px;height:12px;background:#c9e0fb"></div><div class="a" style="left:348px;top:338px;width:12px;height:12px;background:#c6dffb"></div><div class="a" style="left:360px;top:338px;width:12px;height:12px;background:#c3ddfb"></div><div class="a" style="left:372px;top:338px;width:12px;height:12px;background:#c9e1fb"></div><div class="a" style="left:384px;top:338px;width:12px;height:12px;background:#e6f1fd"></div>
<div class="a" style="left:333px;top:338px;width:3px;height:12px;background:#d3e6fc"></div>
<div class="a" style="left:336px;top:614px;width:12px;height:12px;background:#d6e8fc"></div><div class="a" style="left:348px;top:614px;width:12px;height:12px;background:#cfe4fc"></div><div class="a" style="left:360px;top:614px;width:12px;height:12px;background:#bcd9fb"></div><div class="a" style="left:372px;top:614px;width:12px;height:12px;background:#d9e9fd"></div><div class="a" style="left:384px;top:614px;width:12px;height:12px;background:#eaf3fe"></div><div class="a" style="left:336px;top:626px;width:12px;height:12px;background:#eef5fe"></div><div class="a" style="left:348px;top:626px;width:12px;height:12px;background:#f1f7fe"></div><div class="a" style="left:360px;top:626px;width:12px;height:12px;background:#f3f8fe"></div><div class="a" style="left:372px;top:626px;width:12px;height:12px;background:#e9f2fe"></div><div class="a" style="left:384px;top:626px;width:12px;height:12px;background:#f6fafe"></div>
<div class="a" style="left:336px;top:650px;width:12px;height:12px;background:#e6f1fd"></div><div class="a" style="left:348px;top:650px;width:12px;height:12px;background:#e9f2fe"></div><div class="a" style="left:360px;top:650px;width:12px;height:12px;background:#dfedfd"></div><div class="a" style="left:372px;top:650px;width:12px;height:12px;background:#e6f1fd"></div><div class="a" style="left:384px;top:650px;width:12px;height:12px;background:#f0f6fe"></div><div class="a" style="left:336px;top:662px;width:12px;height:12px;background:#d7e8fc"></div><div class="a" style="left:348px;top:662px;width:12px;height:12px;background:#d3e6fc"></div><div class="a" style="left:360px;top:662px;width:12px;height:12px;background:#cfe3fc"></div><div class="a" style="left:372px;top:662px;width:12px;height:12px;background:#d9e9fd"></div><div class="a" style="left:384px;top:662px;width:12px;height:12px;background:#eef5fe"></div>
<div class="a" style="left:336px;top:698px;width:12px;height:12px;background:#c7dffb"></div><div class="a" style="left:348px;top:698px;width:12px;height:12px;background:#c8e0fb"></div><div class="a" style="left:360px;top:698px;width:12px;height:12px;background:#cde3fc"></div><div class="a" style="left:372px;top:698px;width:12px;height:12px;background:#dbeafd"></div><div class="a" style="left:384px;top:698px;width:12px;height:12px;background:#e8f2fe"></div>
<div class="a" style="left:333px;top:378px;width:3px;height:12px;background:#bcd8fb"></div>
<div class="a" style="left:333px;top:418px;width:3px;height:12px;background:#bcd8fb"></div>
<div class="a" style="left:333px;top:458px;width:3px;height:12px;background:#bcd8fb"></div>
<div class="a" style="left:333px;top:498px;width:3px;height:12px;background:#bcd8fb"></div>
<div class="a" style="left:333px;top:538px;width:3px;height:12px;background:#bcd8fb"></div>
<div class="a" style="left:333px;top:578px;width:3px;height:12px;background:#bcd8fb"></div>
<div class="a" style="left:612px;top:290px;width:12px;height:12px;background:#dcdde0"></div><div class="a" style="left:624px;top:290px;width:12px;height:12px;background:#e8e8e8"></div><div class="a" style="left:636px;top:290px;width:12px;height:12px;background:#e0e1e3"></div><div class="a" style="left:648px;top:290px;width:12px;height:12px;background:#dfe0e3"></div><div class="a" style="left:612px;top:302px;width:12px;height:12px;background:#dcdde0"></div><div class="a" style="left:624px;top:302px;width:12px;height:12px;background:#dee0e2"></div><div class="a" style="left:636px;top:302px;width:12px;height:12px;background:#dbdcde"></div><div class="a" style="left:648px;top:302px;width:12px;height:12px;background:#d4d5d7"></div>
<div class="a" style="left:612px;top:338px;width:12px;height:12px;background:#dcdcde"></div><div class="a" style="left:624px;top:338px;width:12px;height:12px;background:#dadcdd"></div><div class="a" style="left:636px;top:338px;width:12px;height:12px;background:#d9d9da"></div><div class="a" style="left:648px;top:338px;width:12px;height:12px;background:#d8dadc"></div><div class="a" style="left:660px;top:338px;width:12px;height:12px;background:#dadbdc"></div><div class="a" style="left:672px;top:338px;width:12px;height:12px;background:#dcdcdb"></div><div class="a" style="left:684px;top:338px;width:12px;height:12px;background:#eeeff0"></div>
<div class="a" style="left:612px;top:374px;width:12px;height:12px;background:#dcdcde"></div><div class="a" style="left:624px;top:374px;width:12px;height:12px;background:#dadcdd"></div><div class="a" style="left:636px;top:374px;width:12px;height:12px;background:#d9d9da"></div><div class="a" style="left:648px;top:374px;width:12px;height:12px;background:#d8dadc"></div><div class="a" style="left:660px;top:374px;width:12px;height:12px;background:#dadbdc"></div><div class="a" style="left:672px;top:374px;width:12px;height:12px;background:#dcdcdb"></div><div class="a" style="left:684px;top:374px;width:12px;height:12px;background:#eeeff0"></div><div class="a" style="left:612px;top:386px;width:12px;height:12px;background:#f3f3f3"></div><div class="a" style="left:624px;top:386px;width:12px;height:12px;background:#f6f6f6"></div><div class="a" style="left:636px;top:386px;width:12px;height:12px;background:#f2f2f2"></div><div class="a" style="left:648px;top:386px;width:12px;height:12px;background:#f4f4f4"></div><div class="a" style="left:660px;top:386px;width:12px;height:12px;background:#f5f5f5"></div><div class="a" style="left:672px;top:386px;width:12px;height:12px;background:#f3f3f3"></div><div class="a" style="left:684px;top:386px;width:12px;height:12px;background:#f8f8f8"></div>
<div class="a" style="left:612px;top:410px;width:12px;height:12px;background:#f3f3f3"></div><div class="a" style="left:624px;top:410px;width:12px;height:12px;background:#f6f6f6"></div><div class="a" style="left:636px;top:410px;width:12px;height:12px;background:#f2f2f2"></div><div class="a" style="left:648px;top:410px;width:12px;height:12px;background:#f4f4f4"></div><div class="a" style="left:660px;top:410px;width:12px;height:12px;background:#f5f5f5"></div><div class="a" style="left:672px;top:410px;width:12px;height:12px;background:#f3f3f3"></div><div class="a" style="left:684px;top:410px;width:12px;height:12px;background:#f8f8f8"></div><div class="a" style="left:612px;top:422px;width:12px;height:12px;background:#dcdcde"></div><div class="a" style="left:624px;top:422px;width:12px;height:12px;background:#dadcdd"></div><div class="a" style="left:636px;top:422px;width:12px;height:12px;background:#d9d9da"></div><div class="a" style="left:648px;top:422px;width:12px;height:12px;background:#d8dadc"></div><div class="a" style="left:660px;top:422px;width:12px;height:12px;background:#dadbdc"></div><div class="a" style="left:672px;top:422px;width:12px;height:12px;background:#dcdcdb"></div><div class="a" style="left:684px;top:422px;width:12px;height:12px;background:#eeeff0"></div>
<div class="a" style="left:612px;top:494px;width:12px;height:12px;background:#dcdcde"></div><div class="a" style="left:624px;top:494px;width:12px;height:12px;background:#dadcdd"></div><div class="a" style="left:636px;top:494px;width:12px;height:12px;background:#d9d9da"></div><div class="a" style="left:648px;top:494px;width:12px;height:12px;background:#d8dadc"></div><div class="a" style="left:660px;top:494px;width:12px;height:12px;background:#dadbdc"></div><div class="a" style="left:672px;top:494px;width:12px;height:12px;background:#dcdcdb"></div><div class="a" style="left:684px;top:494px;width:12px;height:12px;background:#eeeff0"></div><div class="a" style="left:612px;top:506px;width:12px;height:12px;background:#f3f3f3"></div><div class="a" style="left:624px;top:506px;width:12px;height:12px;background:#f6f6f6"></div><div class="a" style="left:636px;top:506px;width:12px;height:12px;background:#f2f2f2"></div><div class="a" style="left:648px;top:506px;width:12px;height:12px;background:#f4f4f4"></div><div class="a" style="left:660px;top:506px;width:12px;height:12px;background:#f5f5f5"></div><div class="a" style="left:672px;top:506px;width:12px;height:12px;background:#f3f3f3"></div><div class="a" style="left:684px;top:506px;width:12px;height:12px;background:#f8f8f8"></div>
<div class="a" style="left:612px;top:530px;width:12px;height:12px;background:#e2e4e7"></div><div class="a" style="left:624px;top:530px;width:12px;height:12px;background:#dfe2e6"></div><div class="a" style="left:636px;top:530px;width:12px;height:12px;background:#e4e5e8"></div><div class="a" style="left:648px;top:530px;width:12px;height:12px;background:#e2e3e6"></div><div class="a" style="left:660px;top:530px;width:12px;height:12px;background:#dfe1e4"></div><div class="a" style="left:672px;top:530px;width:12px;height:12px;background:#e3e4e7"></div><div class="a" style="left:684px;top:530px;width:12px;height:12px;background:#eceef1"></div><div class="a" style="left:612px;top:542px;width:12px;height:12px;background:#e0e2e5"></div><div class="a" style="left:624px;top:542px;width:12px;height:12px;background:#dde0e4"></div><div class="a" style="left:636px;top:542px;width:12px;height:12px;background:#d8dbdf"></div><div class="a" style="left:648px;top:542px;width:12px;height:12px;background:#dcdfe3"></div><div class="a" style="left:660px;top:542px;width:12px;height:12px;background:#d7dadd"></div><div class="a" style="left:672px;top:542px;width:12px;height:12px;background:#dfe1e4"></div><div class="a" style="left:684px;top:542px;width:12px;height:12px;background:#e8eaed"></div>
<div class="a" style="left:612px;top:578px;width:12px;height:12px;background:#cdcdce"></div><div class="a" style="left:624px;top:578px;width:12px;height:12px;background:#d2d3d4"></div><div class="a" style="left:636px;top:578px;width:12px;height:12px;background:#cbcccd"></div><div class="a" style="left:648px;top:578px;width:12px;height:12px;background:#d3d4d4"></div><div class="a" style="left:660px;top:578px;width:12px;height:12px;background:#c9caca"></div><div class="a" style="left:672px;top:578px;width:12px;height:12px;background:#d6dadb"></div><div class="a" style="left:684px;top:578px;width:12px;height:12px;background:#ebecec"></div>
<div class="a" style="left:612px;top:614px;width:12px;height:12px;background:#dcdddd"></div><div class="a" style="left:624px;top:614px;width:12px;height:12px;background:#dedfdf"></div><div class="a" style="left:636px;top:614px;width:12px;height:12px;background:#dcdcdd"></div><div class="a" style="left:648px;top:614px;width:12px;height:12px;background:#dddedf"></div><div class="a" style="left:660px;top:614px;width:12px;height:12px;background:#cfd0d2"></div><div class="a" style="left:672px;top:614px;width:12px;height:12px;background:#e4e4e4"></div><div class="a" style="left:684px;top:614px;width:12px;height:12px;background:#f2f3f3"></div><div class="a" style="left:612px;top:626px;width:12px;height:12px;background:#f3f3f3"></div><div class="a" style="left:624px;top:626px;width:12px;height:12px;background:#f6f6f6"></div><div class="a" style="left:636px;top:626px;width:12px;height:12px;background:#f2f2f2"></div><div class="a" style="left:648px;top:626px;width:12px;height:12px;background:#f4f4f4"></div><div class="a" style="left:660px;top:626px;width:12px;height:12px;background:#f5f5f5"></div><div class="a" style="left:672px;top:626px;width:12px;height:12px;background:#f3f3f3"></div><div class="a" style="left:684px;top:626px;width:12px;height:12px;background:#f8f8f8"></div>
<div class="a" style="left:612px;top:650px;width:12px;height:12px;background:#f3f3f3"></div><div class="a" style="left:624px;top:650px;width:12px;height:12px;background:#f6f6f6"></div><div class="a" style="left:636px;top:650px;width:12px;height:12px;background:#f2f2f2"></div><div class="a" style="left:648px;top:650px;width:12px;height:12px;background:#f4f4f4"></div><div class="a" style="left:660px;top:650px;width:12px;height:12px;background:#f5f5f5"></div><div class="a" style="left:672px;top:650px;width:12px;height:12px;background:#f3f3f3"></div><div class="a" style="left:684px;top:650px;width:12px;height:12px;background:#f8f8f8"></div><div class="a" style="left:612px;top:662px;width:12px;height:12px;background:#e0e1e2"></div><div class="a" style="left:624px;top:662px;width:12px;height:12px;background:#dfe0e1"></div><div class="a" style="left:636px;top:662px;width:12px;height:12px;background:#dddede"></div><div class="a" style="left:648px;top:662px;width:12px;height:12px;background:#dfe0e0"></div><div class="a" style="left:660px;top:662px;width:12px;height:12px;background:#dedfdf"></div><div class="a" style="left:672px;top:662px;width:12px;height:12px;background:#dfe0e1"></div><div class="a" style="left:684px;top:662px;width:12px;height:12px;background:#f0f1f1"></div>
<div class="a" style="left:612px;top:698px;width:12px;height:12px;background:#dadada"></div><div class="a" style="left:624px;top:698px;width:12px;height:12px;background:#d8d9da"></div><div class="a" style="left:636px;top:698px;width:12px;height:12px;background:#d5d3d3"></div><div class="a" style="left:648px;top:698px;width:12px;height:12px;background:#d7d8da"></div><div class="a" style="left:660px;top:698px;width:12px;height:12px;background:#d3d6d8"></div><div class="a" style="left:672px;top:698px;width:12px;height:12px;background:#dbdcdc"></div><div class="a" style="left:684px;top:698px;width:12px;height:12px;background:#eeeff0"></div>
<svg class="a" style="left:604px;top:337px" width="5" height="12"><path d="M3.5 1 V11 M3.5 1 L1 3" stroke="#606266" stroke-width="1.1" fill="none"/></svg>
<svg class="a" style="left:604px;top:377px" width="5" height="12"><path d="M3.5 1 V11 M3.5 1 L1 3" stroke="#606266" stroke-width="1.1" fill="none"/></svg>
<svg class="a" style="left:604px;top:417px" width="5" height="12"><path d="M3.5 1 V11 M3.5 1 L1 3" stroke="#606266" stroke-width="1.1" fill="none"/></svg>
<svg class="a" style="left:604px;top:497px" width="5" height="12"><path d="M3.5 1 V11 M3.5 1 L1 3" stroke="#606266" stroke-width="1.1" fill="none"/></svg>
<svg class="a" style="left:604px;top:537px" width="5" height="12"><path d="M3.5 1 V11 M3.5 1 L1 3" stroke="#606266" stroke-width="1.1" fill="none"/></svg>
<svg class="a" style="left:604px;top:577px" width="5" height="12"><path d="M3.5 1 V11 M3.5 1 L1 3" stroke="#606266" stroke-width="1.1" fill="none"/></svg>
<svg class="a" style="left:604px;top:617px" width="5" height="12"><path d="M3.5 1 V11 M3.5 1 L1 3" stroke="#606266" stroke-width="1.1" fill="none"/></svg>
<svg class="a" style="left:604px;top:657px" width="5" height="12"><path d="M3.5 1 V11 M3.5 1 L1 3" stroke="#606266" stroke-width="1.1" fill="none"/></svg>
<svg class="a" style="left:604px;top:697px" width="5" height="12"><path d="M3.5 1 V11 M3.5 1 L1 3" stroke="#606266" stroke-width="1.1" fill="none"/></svg>
<div class="a" style="left:262px;top:738px;font-size:13.5px;line-height:18px;color:#e6a23c">总账户余额:37351.20</div>
<div class="a" style="left:441px;top:738px;font-size:13.5px;line-height:18px;color:#e6a23c">总赠送账户:2500.00</div>
<div class="a" style="left:613px;top:738px;font-size:13.5px;line-height:18px;color:#e6a23c">总积分账户:13127.80</div>
<div class="a" style="left:791px;top:738px;font-size:13.5px;line-height:18px;color:#e6a23c">总售卡工本费:2600.00</div>
<div class="a" style="left:977px;top:738px;font-size:13.5px;line-height:18px;color:#e6a23c">总累计积分:13927.80</div>
<div class="a" style="left:1156px;top:738px;font-size:13.5px;line-height:18px;color:#e6a23c">总累计消费:43518.00</div>
<div class="a" style="left:240px;top:759px;width:1320px;height:6px;border-radius:3px;background:#dcdad6"></div>
<div class="a" style="left:1457px;top:784px;font-size:12.5px;line-height:18px;color:#606266">共 19 条</div>
<div class="a" style="left:1517px;top:781px;width:100px;height:24px;border:1px solid #dcdfe6;border-radius:3px"></div>
<div class="a" style="left:1536px;top:784px;font-size:12.5px;line-height:18px;color:#606266">10条/页</div>
<svg class="a" style="left:1597px;top:789px" width="12" height="8"><path d="M1 1 L6 6 L11 1" stroke="#a8abb2" stroke-width="1.1" fill="none"/></svg>
<div class="a" style="left:1633px;top:781px;width:24px;height:24px;border-radius:2px;background:#f4f4f5"></div>
<svg class="a" style="left:1641px;top:788px" width="8" height="11"><path d="M6 1 L1.5 5.5 L6 10" stroke="#c0c4cc" stroke-width="1.1" fill="none"/></svg>
<div class="a" style="left:1664px;top:781px;width:25px;height:24px;border-radius:2px;background:#00c08b;color:#fff;font-weight:bold;text-align:center;font-size:13px;line-height:24px">1</div>
<div class="a" style="left:1696px;top:781px;width:25px;height:24px;border-radius:2px;background:#f4f4f5;color:#606266;text-align:center;font-size:13px;line-height:24px">2</div>
<div class="a" style="left:1728px;top:781px;width:25px;height:24px;border-radius:2px;background:#f4f4f5"></div>
<svg class="a" style="left:1737px;top:788px" width="8" height="11"><path d="M2 1 L6.5 5.5 L2 10" stroke="#606266" stroke-width="1.1" fill="none"/></svg>
<div class="a" style="left:1768px;top:784px;font-size:12.5px;line-height:18px;color:#606266">前往</div>
<div class="a" style="left:1801px;top:781px;width:56px;height:24px;border:1px solid #dcdfe6;border-radius:3px;text-align:center;font-size:13px;line-height:23px;color:#606266">1</div>
<div class="a" style="left:1865px;top:784px;font-size:12.5px;line-height:18px;color:#606266">页</div>
</body></html>
